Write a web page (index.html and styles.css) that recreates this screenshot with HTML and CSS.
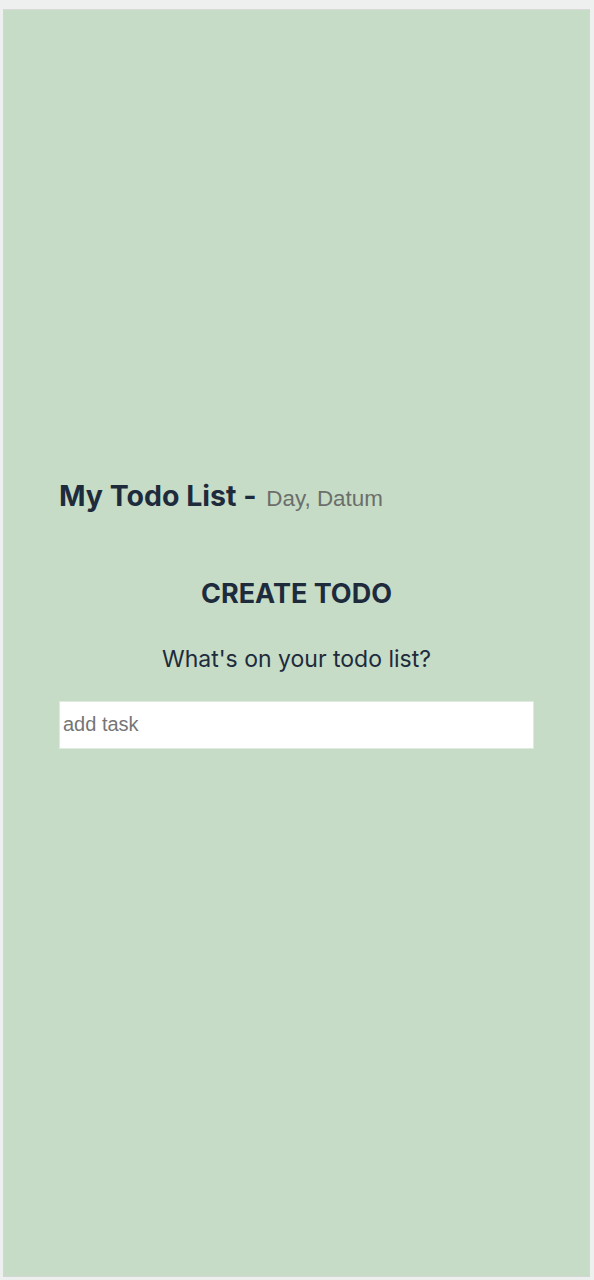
FILE: index.html
```html
<!DOCTYPE html>
<html lang="en">
<head>
<meta charset="utf-8">
<title>My Todo List</title>
<link rel="stylesheet" href="styles.css">
</head>
<body>
<div class="frame">
  <main class="app">
    <div class="content">
      <h1 class="title">My Todo List - <span class="date">Day, Datum</span></h1>
      <section class="create">
        <h2 class="create-title">CREATE TODO</h2>
        <p class="create-label">What's on your todo list?</p>
        <input class="task-input" type="text" placeholder="add task">
      </section>
    </div>
  </main>
</div>
</body>
</html>
```
FILE: styles.css
```css
html, body {
  margin: 0;
  padding: 0;
}
body {
  background: #eef0ef;
  font-family: Inter, "Noto Sans", sans-serif;
}
.frame {
  padding: 9px 4px 3px 3px;
}
.app {
  height: 1266px;
  background: #c6dcc6;
  border: 1px solid #d4d6d4;
  border-top-color: #d8dad8;
  display: flex;
  align-items: center;
  justify-content: center;
}
.content {
  width: 475px;
  margin-top: -58px;
}
.title {
  margin: 0;
  font-size: 28.5px;
  font-weight: 700;
  color: #1e2b3c;
  line-height: 1.2;
}
.date {
  margin-left: 3px;
  font-family: "Liberation Sans", Arial, sans-serif;
  font-weight: 400;
  font-size: 22.4px;
  color: #6b6e6b;
}
.create {
  display: flex;
  flex-direction: column;
  align-items: center;
  margin-top: 64px;
}
.create-title {
  margin: 0;
  font-size: 27px;
  font-weight: 700;
  color: #1e2b3c;
  line-height: 1.2;
}
.create-label {
  margin: 36px 0 0;
  font-size: 23px;
  color: #1e2b3c;
  line-height: 1.2;
}
.task-input {
  margin-top: 27px;
  box-sizing: border-box;
  width: 100%;
  height: 48px;
  border: 1px solid #dfeadf;
  background: #fff;
  padding: 0 3px;
  font-family: "Liberation Sans", Arial, sans-serif;
  font-size: 20px;
  color: #333;
  outline: none;
}
.task-input::placeholder {
  color: #757575;
}
```
